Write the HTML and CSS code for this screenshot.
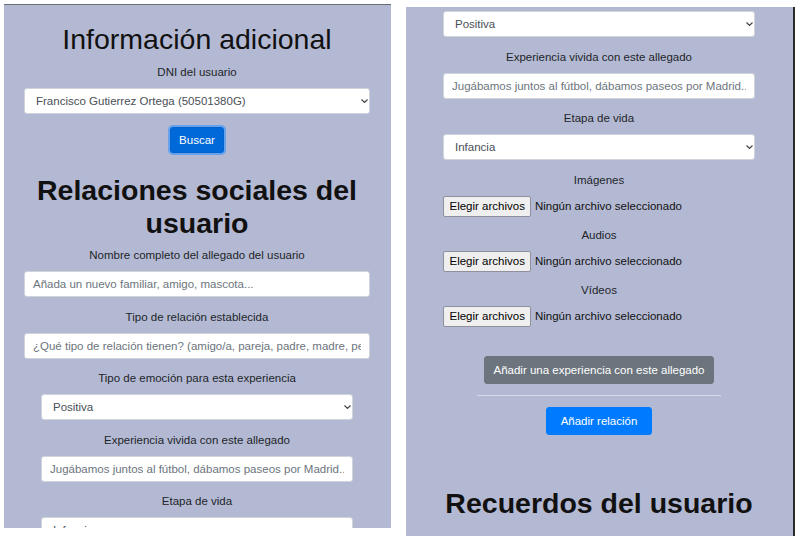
FILE: index.html
```html
<!DOCTYPE html>
<html lang="es">
<head>
<meta charset="utf-8">
<title>Información adicional</title>
<link rel="stylesheet" href="styles.css">
</head>
<body>
<div class="shots">
  <section class="panel panel-left">
    <div class="form">
      <h1 class="title title-light">Información adicional</h1>
      <div class="group group-dni">
        <label class="lbl">DNI del usuario</label>
        <div class="select-wrap">
          <select class="ctl"><option>Francisco Gutierrez Ortega (50501380G)</option></select>
          <svg class="chev" width="7" height="4" viewBox="0 0 7 4"><path d="M0.5 0.5 L3.5 3.4 L6.5 0.5" fill="none" stroke="#444" stroke-width="1.2"/></svg>
        </div>
      </div>
      <div class="actions"><button class="btn btn-search">Buscar</button></div>
      <h1 class="title title-bold">Relaciones sociales del usuario</h1>
      <div class="group">
        <label class="lbl">Nombre completo del allegado del usuario</label>
        <input class="ctl" type="text" placeholder="Añada un nuevo familiar, amigo, mascota...">
      </div>
      <div class="group">
        <label class="lbl">Tipo de relación establecida</label>
        <input class="ctl" type="text" placeholder="¿Qué tipo de relación tienen? (amigo/a, pareja, padre, madre, perro...)">
      </div>
      <div class="experience">
        <div class="group">
          <label class="lbl">Tipo de emoción para esta experiencia</label>
          <div class="select-wrap">
            <select class="ctl"><option>Positiva</option></select>
            <svg class="chev" width="7" height="4" viewBox="0 0 7 4"><path d="M0.5 0.5 L3.5 3.4 L6.5 0.5" fill="none" stroke="#444" stroke-width="1.2"/></svg>
          </div>
        </div>
        <div class="group">
          <label class="lbl">Experiencia vivida con este allegado</label>
          <input class="ctl" type="text" placeholder="Jugábamos juntos al fútbol, dábamos paseos por Madrid...">
        </div>
        <div class="group">
          <label class="lbl">Etapa de vida</label>
          <div class="select-wrap">
            <select class="ctl"><option>Infancia</option></select>
            <svg class="chev" width="7" height="4" viewBox="0 0 7 4"><path d="M0.5 0.5 L3.5 3.4 L6.5 0.5" fill="none" stroke="#444" stroke-width="1.2"/></svg>
          </div>
        </div>
      </div>
    </div>
  </section>

  <section class="panel panel-right">
    <div class="form form-right">
      <div class="experience">
        <div class="group">
          <div class="select-wrap">
            <select class="ctl"><option>Positiva</option></select>
            <svg class="chev" width="7" height="4" viewBox="0 0 7 4"><path d="M0.5 0.5 L3.5 3.4 L6.5 0.5" fill="none" stroke="#444" stroke-width="1.2"/></svg>
          </div>
        </div>
        <div class="group">
          <label class="lbl">Experiencia vivida con este allegado</label>
          <input class="ctl" type="text" placeholder="Jugábamos juntos al fútbol, dábamos paseos por Madrid...">
        </div>
        <div class="group">
          <label class="lbl">Etapa de vida</label>
          <div class="select-wrap">
            <select class="ctl"><option>Infancia</option></select>
            <svg class="chev" width="7" height="4" viewBox="0 0 7 4"><path d="M0.5 0.5 L3.5 3.4 L6.5 0.5" fill="none" stroke="#444" stroke-width="1.2"/></svg>
          </div>
        </div>
        <div class="group group-file">
          <label class="lbl">Imágenes</label>
          <div class="file"><button class="file-btn">Elegir archivos</button><span class="file-name">Ningún archivo seleccionado</span></div>
        </div>
        <div class="group group-file">
          <label class="lbl">Audios</label>
          <div class="file"><button class="file-btn">Elegir archivos</button><span class="file-name">Ningún archivo seleccionado</span></div>
        </div>
        <div class="group group-file">
          <label class="lbl">Vídeos</label>
          <div class="file"><button class="file-btn">Elegir archivos</button><span class="file-name">Ningún archivo seleccionado</span></div>
        </div>
      </div>
      <div class="actions actions-exp"><button class="btn btn-secondary">Añadir una experiencia con este allegado</button></div>
      <hr class="divider">
      <div class="actions actions-rel"><button class="btn btn-primary btn-wide">Añadir relación</button></div>
      <h1 class="title title-bold title-memories">Recuerdos del usuario</h1>
    </div>
  </section>
</div>
</body>
</html>
```
FILE: styles.css
```css
* { box-sizing: border-box; }

html, body {
  margin: 0;
  padding: 0;
  background: #ffffff;
}

body {
  font-family: "Liberation Sans", Arial, sans-serif;
  font-size: 11.5px;
  color: #212529;
}

.shots {
  display: flex;
  align-items: flex-start;
  gap: 15px;
  padding-left: 4px;
  height: 536px;
  overflow: hidden;
}

.panel {
  flex: none;
  width: 387px;
  background: #b4b9d3;
  overflow: hidden;
}

.panel-left {
  margin-top: 4px;
  height: 524px;
  border-top: 1px solid #6c6c78;
}

.panel-right {
  margin-top: 7px;
  width: 389px;
  height: 529px;
  border-right: 2px solid #2b2b2b;
}

.form {
  padding: 18px 21px 0 20px;
  text-align: center;
}

.form-right {
  padding-top: 4px;
}

.title {
  margin: 0;
  font-size: 28.5px;
  line-height: 33px;
  color: #111;
}

.title-light {
  font-weight: 400;
  margin-bottom: 8px;
}

.title-bold {
  font-weight: 700;
  line-height: 32.5px;
  margin: 21.3px 0 7.8px;
}

.title-memories {
  margin-top: 52px;
}

.lbl {
  display: block;
  line-height: 17px;
  margin-bottom: 7px;
}

.group {
  margin-bottom: 11.5px;
}

.group-dni {
  margin-bottom: 13px;
}

.group-file {
  margin-bottom: 10px;
}

.experience {
  padding: 0 17px;
}

.ctl {
  display: block;
  width: 100%;
  height: 26px;
  margin: 0;
  padding: 0 8px;
  border: 1px solid #ced4da;
  border-radius: 3px;
  background: #ffffff;
  font-family: inherit;
  font-size: 11.5px;
  color: #495057;
  text-align: left;
  outline: none;
}

select.ctl {
  appearance: none;
  -webkit-appearance: none;
  padding-left: 11px;
  padding-right: 18px;
}

input.ctl::placeholder {
  color: #6c757d;
  opacity: 1;
}

.select-wrap {
  position: relative;
}

.chev {
  position: absolute;
  right: 2.5px;
  top: 50%;
  margin-top: -2px;
  pointer-events: none;
}

.file {
  display: flex;
  align-items: center;
  gap: 3.5px;
  height: 21px;
}

.file-btn {
  height: 21px;
  margin: 0;
  padding: 0 5.5px;
  border: 1px solid #8f8f9d;
  border-radius: 2px;
  background: #efefef;
  font-family: inherit;
  font-size: 11.5px;
  color: #000;
}

.file-name {
  color: #111;
}

.actions {
  display: flex;
  justify-content: center;
}

.actions-exp {
  margin-top: 29.5px;
}

.actions-rel {
  margin-top: 11.5px;
}

.btn {
  height: 28px;
  margin: 0;
  padding: 0 9px;
  border: 1px solid transparent;
  border-radius: 3px;
  font-family: inherit;
  font-size: 11.5px;
  line-height: 26px;
  color: #ffffff;
}

.btn-search {
  width: 54px;
  height: 26px;
  padding: 0;
  line-height: 24px;
  background: #0069d9;
  border-color: #0062cc;
  box-shadow: 0 0 0 2px rgba(38, 143, 255, 0.55);
}

.btn-primary {
  background: #007bff;
  border-color: #007bff;
}

.btn-secondary {
  background: #6c757d;
  border-color: #6c757d;
}

.btn-wide {
  padding: 0 13.5px;
}

.divider {
  width: 244px;
  height: 1px;
  margin: 10.5px auto 0;
  border: 0;
  background: #d6d9e6;
}
```
